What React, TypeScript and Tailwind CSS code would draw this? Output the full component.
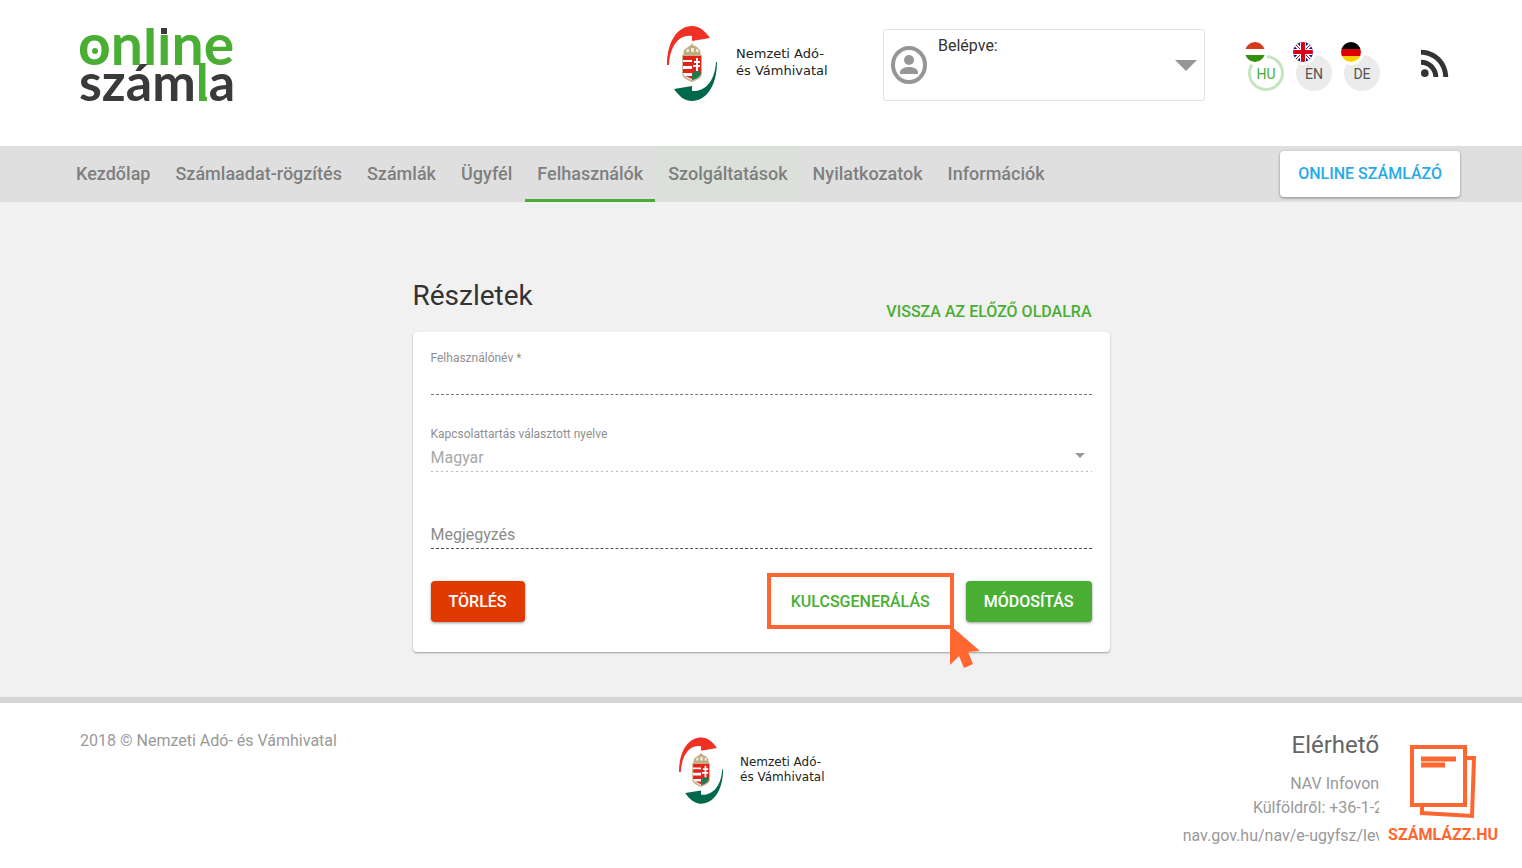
import { clsx } from 'clsx';
import { MdRssFeed } from 'react-icons/md';

const NAV_ITEMS = [
  'Kezdőlap',
  'Számlaadat-rögzítés',
  'Számlák',
  'Ügyfél',
  'Felhasználók',
  'Szolgáltatások',
  'Nyilatkozatok',
  'Információk',
];

function OnlineSzamlaLogo() {
  return (
    <svg width="160" height="82" viewBox="0 0 160 82" className="overflow-visible" role="img" aria-label="Online számla">
      <g fontFamily="Lato, sans-serif" fontWeight="700">
        <text x="-2" y="41" fontSize="57" fill="#4aae34">
          online
        </text>
        <text x="-1" y="77" fontSize="52" fill="#3a3a3a">
          szám<tspan fill="#4aae34">l</tspan>a
        </text>
      </g>
      {/* flat ascender tops and the square dot of the i */}
      <path d="M60 -6h40V4H60zM78 -6h12v17H78z" fill="#fff" />
      <path d="M81 4h6v6h-6z" fill="#3a3a3a" />
      <circle cx="15" cy="27" r="3" fill="#4aae34" />
      <path d="M122 70c0 3 1 5 5 5" fill="none" stroke="#4aae34" strokeWidth="4" />
    </svg>
  );
}

function NavEmblem({ className }: { className: string }) {
  return (
    <svg viewBox="0 0 51 76" className={className} aria-hidden="true">
      <path d="M0 39C0 15 11 0 25 0c8 0 13 5 18 12L25 15V10C12 8 3 20 2 39z" fill="#ee3124" />
      <path d="M50 36c0 24-11 39-25 39-8 0-13-5-18-12l18-3v5c14 1 23-11 24-29z" fill="#00694b" />
      <path d="M16 30l1-6 4-3 3-2 1-2 1 2 4 2 3 3 1 6z" fill="#bfae82" />
      <path d="M19 26h3v-3h-2zm5 0h3v-4h-3zm5 0h3l-1-3h-2z" fill="#efe9da" />
      <path d="M15 29h20v18c0 5-5 7-10 9-5-2-10-4-10-9z" fill="#c5b48c" />
      <path d="M16 30h9v24c-5-2-9-4-9-8z" fill="#fff" />
      <path d="M16 30h9v4h-9zm0 6h9v4h-9zm0 7h9v4h-9zm2 7h7v3z" fill="#e2231a" />
      <path d="M25 30h9v16c0 4-4 6-9 8z" fill="#e2231a" />
      <path d="M29 32h2v3h2v2h-2v2h2v2h-2v5h-2v-5h-3v-2h3v-2h-2v-2h2z" fill="#fff" />
      <path d="M25 48l3-3h4l2 2c-1 4-5 6-9 7z" fill="#1f7a4d" />
    </svg>
  );
}

function UserIcon() {
  return (
    <svg width="36" height="38" viewBox="0 0 36 38" fill="#969696" aria-hidden="true">
      <ellipse cx="18" cy="19" rx="16" ry="17" fill="none" stroke="#969696" strokeWidth="4" />
      <circle cx="18" cy="14" r="5" />
      <path d="M9 28v-2c0-3 5-5 9-5s9 2 9 5v2z" />
    </svg>
  );
}

function Flag({ code }: { code: string }) {
  return (
    <svg width="20" height="20" viewBox="0 0 20 20" className="block rounded-full" aria-hidden="true">
      {code === 'HU' && (
        <>
          <path d="M0 0h20v20H0z" fill="#fff" />
          <path d="M0 0h20v7H0z" fill="#d43a1c" />
          <path d="M0 13h20v7H0z" fill="#36900a" />
        </>
      )}
      {code === 'EN' && (
        <>
          <path d="M0 0h20v20H0z" fill="#12127a" />
          <path d="M0 0l20 20M20 0L0 20" stroke="#fff" strokeWidth="4" />
          <path d="M0 0l20 20M20 0L0 20" stroke="#d8001c" strokeWidth="1" />
          <path d="M10 0v20M0 10h20" stroke="#fff" strokeWidth="6" />
          <path d="M10 0v20M0 10h20" stroke="#d8001c" strokeWidth="4" />
        </>
      )}
      {code === 'DE' && (
        <>
          <path d="M0 0h20v7H0z" fill="#000" />
          <path d="M0 7h20v7H0z" fill="#d00" />
          <path d="M0 14h20v6H0z" fill="#ffce00" />
        </>
      )}
    </svg>
  );
}

function LanguageButton({ code, active = false }: { code: string; active?: boolean }) {
  return (
    <button type="button" className="relative pt-[13px] pl-[3px]">
      <span
        className={clsx(
          'flex h-9 w-9 items-center justify-center rounded-full pt-[2px] text-sm leading-5',
          active ? 'border-3 border-[#c5e5c1] bg-white text-[#4aae34]' : 'bg-[#ebebeb] text-[#555]',
        )}
      >
        {code}
      </span>
      {/* white ring cuts the flag out of the circle */}
      <span className="absolute top-0 left-0 rounded-full bg-white ring-3 ring-white">
        <Flag code={code} />
      </span>
    </button>
  );
}

function SzamlazzLogo() {
  return (
    <svg width="67" height="74" viewBox="0 0 67 74" fill="none" stroke="#ff6630" aria-hidden="true">
      <path d="M56 13h8l-2 58-50-3v-6" strokeWidth="4" />
      <path d="M2 2h53v58H2z" fill="#fff" strokeWidth="4" />
      <path d="M11 14h35M11 20h24" strokeWidth="5" />
    </svg>
  );
}

export default function App() {
  return (
    <div className="min-h-screen bg-white font-['Roboto',sans-serif] text-[#333]">
      <header className="flex h-[146px] items-start pt-6 pr-[66px] pl-20">
        <OnlineSzamlaLogo />
        <div className="ml-auto flex items-center gap-[18px] pt-[2px]">
          <NavEmblem className="h-[76px] w-[51px]" />
          <p className="w-[100px] pb-1 whitespace-nowrap font-['DejaVu_Sans',sans-serif] text-[13px] leading-[17px] text-[#222]">
            Nemzeti Adó-
            <br />
            és Vámhivatal
          </p>
        </div>
        <button
          type="button"
          className="mt-[5px] ml-[47px] flex h-[72px] w-[322px] items-center rounded-[3px] border border-[#e2e2e2] px-[7px] text-left text-base"
        >
          <UserIcon />
          <span className="ml-[11px] self-start pt-1">Belépve:</span>
          <svg width="22" height="11" viewBox="0 0 22 11" className="ml-auto" aria-hidden="true">
            <path d="M0 0h22L11 11z" fill="#969696" />
          </svg>
        </button>
        <div className="ml-10 flex gap-[9px] pt-[18px]">
          <LanguageButton code="HU" active />
          <LanguageButton code="EN" />
          <LanguageButton code="DE" />
        </div>
        <a href="#rss" aria-label="RSS" className="mt-[18px] ml-[34px] text-[#333]">
          <MdRssFeed size={42} />
        </a>
      </header>

      <nav className="flex h-14 items-center bg-[#dfdfdf] pr-[62px] pl-16 text-lg font-medium text-[#7f7f7f]">
        <ul className="flex h-full gap-px">
          {NAV_ITEMS.map((item) => (
            <li key={item}>
              <a
                href="#"
                className={clsx(
                  'flex h-full items-center border-b-3 px-3 pt-[2px]',
                  item === 'Felhasználók' ? 'border-[#4aae34]' : 'border-transparent',
                  item === 'Szolgáltatások' && 'bg-[#dce0db]',
                )}
              >
                {item}
              </a>
            </li>
          ))}
        </ul>
        <button
          type="button"
          className="ml-auto h-[46px] rounded bg-white px-[18px] text-base font-medium text-[#27aae8] shadow-[0_1px_3px_rgba(0,0,0,0.4)]"
        >
          ONLINE SZÁMLÁZÓ
        </button>
      </nav>

      <main className="bg-[#f1f1f1] pt-[76px] pb-[45px]">
        <div className="mx-auto max-w-[697px]">
          <div className="flex h-[54px] items-start justify-between pr-[18px]">
            <h1 className="text-[28px] leading-9">Részletek</h1>
            <a href="#" className="pt-[22px] text-base font-medium text-[#4aae34]">
              VISSZA AZ ELŐZŐ OLDALRA
            </a>
          </div>
          <form className="flex h-[320px] flex-col rounded bg-white px-[18px] pt-4 shadow-[0_1px_2px_rgba(0,0,0,0.35)]">
            <div className="flex h-[76px] flex-col">
              <label htmlFor="username" className="text-xs leading-5 text-[#8f8f8f]">
                Felhasználónév *
              </label>
              <input id="username" className="h-[27px] border-b border-dashed border-[#777] outline-none" />
            </div>
            <div className="flex h-[78px] flex-col">
              <label htmlFor="language" className="text-xs leading-5 text-[#8f8f8f]">
                Kapcsolattartás választott nyelve
              </label>
              <div className="relative bg-[linear-gradient(to_right,#bbb_2px,transparent_2px)] bg-[length:5px_1px] bg-bottom-left bg-repeat-x">
                <select
                  id="language"
                  className="block h-7 w-full appearance-none bg-transparent pb-px text-base leading-6 text-[#a9a9a9] outline-none"
                >
                  <option>Magyar</option>
                </select>
                <svg width="10" height="5" viewBox="0 0 10 5" className="absolute top-[9px] right-[7px]" aria-hidden="true">
                  <path d="M0 0h10L5 5z" fill="#999" />
                </svg>
              </div>
            </div>
            <input
              id="note"
              aria-label="Megjegyzés"
              placeholder="Megjegyzés"
              className="mt-[18px] h-[29px] border-b border-dashed border-[#555] text-base outline-none placeholder:text-[#8c8c8c]"
            />
            <div className="mt-6 flex h-14 items-center font-medium">
              <button
                type="button"
                className="h-[41px] rounded bg-[#e03a00] px-[18px] pt-px text-white shadow-[0_1px_3px_rgba(0,0,0,0.4)]"
              >
                TÖRLÉS
              </button>
              <div className="relative mr-3 ml-auto border-4 border-[#ff6630]">
                <button type="button" className="h-12 px-5 pt-px text-[#4aae34]">
                  KULCSGENERÁLÁS
                </button>
                {/* pointer on the key generation button */}
                <svg width="30" height="45" viewBox="0 0 30 45" className="absolute top-full left-full" aria-hidden="true">
                  <path d="M0 0L30 26L18 27L23 39L14 43L9 31L0 40z" fill="#ff6630" />
                </svg>
              </div>
              <button
                type="button"
                className="h-[41px] rounded bg-[#4aae34] px-[18px] pt-px text-white shadow-[0_1px_3px_rgba(0,0,0,0.4)]"
              >
                MÓDOSÍTÁS
              </button>
            </div>
          </form>
        </div>
      </main>

      <footer className="grid grid-cols-[1fr_146px_1fr] items-start border-t-6 border-[#d6d6d6] pr-6 pl-[6px] text-[#999]">
        <p className="pt-[26px] pl-[74px] text-base">2018 © Nemzeti Adó- és Vámhivatal</p>
        <div className="flex items-center gap-4 pt-[34px]">
          <NavEmblem className="h-[68px] w-[45px]" />
          <p className="pb-[2px] whitespace-nowrap font-['DejaVu_Sans',sans-serif] text-xs leading-[15px] text-[#222]">
            Nemzeti Adó-
            <br />
            és Vámhivatal
          </p>
        </div>
        <div className="flex justify-end">
          <div className="overflow-hidden pt-6">
            <div className="-mr-1 text-right text-base leading-6 whitespace-nowrap">
              <h2 className="pr-1 text-2xl leading-9 text-[#666]">Elérhető</h2>
              <p className="pt-[9px] pr-1">NAV Infovon</p>
              <p>Külföldről: +36-1-2</p>
              <p className="pt-1">nav.gov.hu/nav/e-ugyfsz/lev</p>
            </div>
          </div>
          <a href="#" className="ml-[9px] flex flex-col items-center pt-[42px] text-base leading-6 font-bold text-[#ff6630]">
            <SzamlazzLogo />
            <span className="pt-1">SZÁMLÁZZ.HU</span>
          </a>
        </div>
      </footer>
    </div>
  );
}
